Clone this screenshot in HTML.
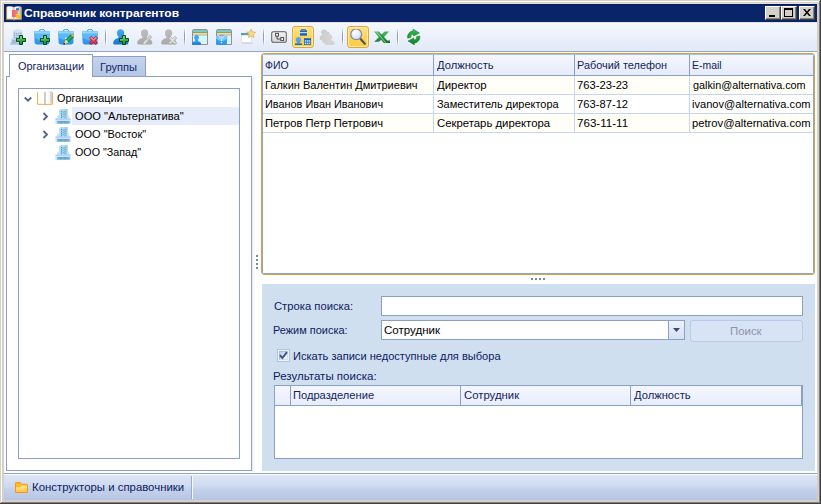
<!DOCTYPE html><html><head><meta charset="utf-8"><title>Справочник контрагентов</title><style>
html,body{margin:0;padding:0}body{width:821px;height:504px;position:relative;overflow:hidden;background:#d4d0c8;font:11px "Liberation Sans",sans-serif}
div,span,svg{box-sizing:border-box}
.t{position:absolute;white-space:pre;line-height:13px;height:13px;transform-origin:0 0;font:11px/13px "Liberation Sans",sans-serif}
.b{font-weight:bold}

</style></head><body>
<svg width="0" height="0" style="position:absolute"><defs>
<linearGradient id="bg1" x1="0" y1="0" x2="0" y2="1"><stop offset="0" stop-color="#4cb0f6"/><stop offset="1" stop-color="#2890ea"/></linearGradient>
<linearGradient id="pg1" x1="0" y1="0" x2="0" y2="1"><stop offset="0" stop-color="#44a8f4"/><stop offset=".5" stop-color="#2c94e8"/><stop offset="1" stop-color="#1274d0"/></linearGradient>
<linearGradient id="pgd" x1="0" y1="0" x2="0" y2="1"><stop offset="0" stop-color="#bebebe"/><stop offset="1" stop-color="#a8a8a8"/></linearGradient>
<linearGradient id="gp" x1="0" y1="0" x2="0" y2="1"><stop offset="0" stop-color="#58cc68"/><stop offset="1" stop-color="#168a2e"/></linearGradient>
<linearGradient id="fg1" x1="0" y1="0" x2="0" y2="1"><stop offset="0" stop-color="#ffe89c"/><stop offset="1" stop-color="#fcc444"/></linearGradient>
<linearGradient id="pgL" x1="0" y1="0" x2="1" y2="0"><stop offset="0" stop-color="#ffffff"/><stop offset=".6" stop-color="#f4fbfd"/><stop offset="1" stop-color="#c8e4ea"/></linearGradient>
<linearGradient id="pgR" x1="0" y1="0" x2="1" y2="0"><stop offset="0" stop-color="#ffffff"/><stop offset=".5" stop-color="#e0f0f4"/><stop offset="1" stop-color="#9cc0c4"/></linearGradient>
<linearGradient id="bkR" x1="0" y1="0" x2="1" y2="0"><stop offset="0" stop-color="#fafafa"/><stop offset=".3" stop-color="#ffffff"/><stop offset=".7" stop-color="#f4f4f6"/><stop offset="1" stop-color="#b4b4bc"/></linearGradient>
<linearGradient id="bkL" x1="0" y1="0" x2="1" y2="0"><stop offset="0" stop-color="#ffffff"/><stop offset=".8" stop-color="#fdfdfd"/><stop offset="1" stop-color="#e8ece8"/></linearGradient>
<linearGradient id="redg" x1="0" y1="0" x2="1" y2="0"><stop offset="0" stop-color="#e85c68" stop-opacity=".8"/><stop offset="1" stop-color="#f89090" stop-opacity=".6"/></linearGradient>
<radialGradient id="lens" cx=".4" cy=".35" r=".75"><stop offset="0" stop-color="#ffffff"/><stop offset="1" stop-color="#c4dcf4"/></radialGradient>
<linearGradient id="xl1" x1="0" y1="0" x2="1" y2="1"><stop offset="0" stop-color="#5cbc68"/><stop offset=".5" stop-color="#2a9240"/><stop offset="1" stop-color="#14702a"/></linearGradient>
<linearGradient id="xl2" x1="1" y1="0" x2="0" y2="1"><stop offset="0" stop-color="#58bc64"/><stop offset="1" stop-color="#1c7c30"/></linearGradient>
<linearGradient id="rf" x1="0" y1="0" x2="0" y2="1"><stop offset="0" stop-color="#34c454"/><stop offset="1" stop-color="#159030"/></linearGradient>
<linearGradient id="rf2" x1="0" y1="1" x2="0" y2="0"><stop offset="0" stop-color="#22a840"/><stop offset="1" stop-color="#108028"/></linearGradient>
<linearGradient id="stg" x1="0" y1="0" x2="0" y2="1"><stop offset="0" stop-color="#f4f4f4"/><stop offset="1" stop-color="#d4d4d4"/></linearGradient>
<linearGradient id="rxg" x1="0" y1="0" x2="0" y2="1"><stop offset="0" stop-color="#fa8c94"/><stop offset=".5" stop-color="#ee4456"/><stop offset="1" stop-color="#dc2436"/></linearGradient>
</defs></svg>
<div style="position:absolute;left:0px;top:0px;width:821px;height:504px;background:#d4d0c8"></div>
<div style="position:absolute;left:0px;top:0px;width:820px;height:503px;border-left:1px solid #d4d0c8;border-top:1px solid #d4d0c8"></div>
<div style="position:absolute;left:1px;top:1px;width:819px;height:502px;border-left:1px solid #fff;border-top:1px solid #fff"></div>
<div style="position:absolute;left:4px;top:3px;width:813px;height:1px;background:#e4e0d6"></div>
<div style="position:absolute;left:0px;top:0px;width:821px;height:504px;border-right:1px solid #404040;border-bottom:1px solid #404040"></div>
<div style="position:absolute;left:1px;top:1px;width:819px;height:502px;border-right:1px solid #808080;border-bottom:1px solid #808080"></div>
<div style="position:absolute;left:4px;top:4px;width:813px;height:18px;background:#0a246a"></div>
<div style="position:absolute;left:4px;top:4px;width:813px;height:1px;background:#031c68"></div>
<svg style="position:absolute;left:6px;top:5px" width="16" height="16" viewBox="0 0 16 16"><path d="M.400 2.200H15.600V14.600H9L8 15.300 7 14.600H.400z" fill="#e0b866" stroke="#c89a40" stroke-width=".6"/><path d="M1.200 1.400Q5 .600 7.800 2.200V14.300Q5 13 1.200 13.600z" fill="url(#pgL)"/><path d="M14.800 1.400Q11 .600 8.200 2.200V14.300Q11 13 14.800 13.600z" fill="url(#pgR)"/><path d="M8 2.200v12.300" stroke="#8aa4a8" stroke-width=".6"/><rect x="10.100" y="3.200" width="2.800" height="2.200" fill="#1e70c0"/><rect x="6.100" y="5" width="5.800" height="7" fill="#ee7078"/><rect x="6.100" y="5" width="5.800" height="7" fill="url(#redg)"/><rect x="9.900" y="8.900" width="4.100" height="4" fill="#fcbc1c"/><rect x="9.900" y="8.900" width="4.100" height="1.200" fill="#fdd440"/></svg>
<div style="position:absolute;left:765px;top:6px;width:16px;height:14px;background:#d4d0c8;border:1px solid;border-color:#fff #404040 #404040 #fff;box-shadow:inset -1px -1px 0 #808080"></div>
<div style="position:absolute;left:781px;top:6px;width:16px;height:14px;background:#d4d0c8;border:1px solid;border-color:#fff #404040 #404040 #fff;box-shadow:inset -1px -1px 0 #808080"></div>
<div style="position:absolute;left:799px;top:6px;width:16px;height:14px;background:#d4d0c8;border:1px solid;border-color:#fff #404040 #404040 #fff;box-shadow:inset -1px -1px 0 #808080"></div>
<div style="position:absolute;left:769px;top:15px;width:6px;height:2px;background:#000"></div>
<div style="position:absolute;left:784px;top:8px;width:9px;height:9px;border:1px solid #000;border-top-width:2px"></div>
<svg style="position:absolute;left:803px;top:9px" width="8" height="7" viewBox="0 0 8 7"><path d="M0 0h2l2 2.500L6 0h2L5 3.500 8 7H6L4 4.500 2 7H0l3-3.500z" fill="#000"/></svg>
<div style="position:absolute;left:4px;top:23px;width:813px;height:477px;background:#fff"></div>
<div style="position:absolute;left:4px;top:22px;width:813px;height:1px;background:#e6e2d8"></div>
<div style="position:absolute;left:4px;top:23px;width:813px;height:28px;background:linear-gradient(#f4f7fd,#ebf0fa 50%,#e2e9f8)"></div>
<div style="position:absolute;left:4px;top:51px;width:813px;height:1px;background:#94a4c6"></div>
<div style="position:absolute;left:292px;top:26px;width:22px;height:22px;background:linear-gradient(#ffe08a,#ffd458 50%,#ffcc44);border:1px solid #e0a838;border-radius:3px;box-shadow:inset 0 0 0 1px #ffe8a8"></div>
<div style="position:absolute;left:347px;top:26px;width:22px;height:22px;background:linear-gradient(#ffe08a,#ffd458 50%,#ffcc44);border:1px solid #e0a838;border-radius:3px;box-shadow:inset 0 0 0 1px #ffe8a8"></div>
<div style="position:absolute;left:105px;top:28px;width:1px;height:18px;background:linear-gradient(rgba(138,156,192,0),#8a9cc0 35%,#8a9cc0 65%,rgba(138,156,192,0))"></div>
<div style="position:absolute;left:106px;top:28px;width:1px;height:18px;background:linear-gradient(rgba(255,255,255,0),#fff 30%,#fff 70%,rgba(255,255,255,0))"></div>
<div style="position:absolute;left:184px;top:28px;width:1px;height:18px;background:linear-gradient(rgba(138,156,192,0),#8a9cc0 35%,#8a9cc0 65%,rgba(138,156,192,0))"></div>
<div style="position:absolute;left:185px;top:28px;width:1px;height:18px;background:linear-gradient(rgba(255,255,255,0),#fff 30%,#fff 70%,rgba(255,255,255,0))"></div>
<div style="position:absolute;left:263px;top:28px;width:1px;height:18px;background:linear-gradient(rgba(138,156,192,0),#8a9cc0 35%,#8a9cc0 65%,rgba(138,156,192,0))"></div>
<div style="position:absolute;left:264px;top:28px;width:1px;height:18px;background:linear-gradient(rgba(255,255,255,0),#fff 30%,#fff 70%,rgba(255,255,255,0))"></div>
<div style="position:absolute;left:342px;top:28px;width:1px;height:18px;background:linear-gradient(rgba(138,156,192,0),#8a9cc0 35%,#8a9cc0 65%,rgba(138,156,192,0))"></div>
<div style="position:absolute;left:343px;top:28px;width:1px;height:18px;background:linear-gradient(rgba(255,255,255,0),#fff 30%,#fff 70%,rgba(255,255,255,0))"></div>
<div style="position:absolute;left:397px;top:28px;width:1px;height:18px;background:linear-gradient(rgba(138,156,192,0),#8a9cc0 35%,#8a9cc0 65%,rgba(138,156,192,0))"></div>
<div style="position:absolute;left:398px;top:28px;width:1px;height:18px;background:linear-gradient(rgba(255,255,255,0),#fff 30%,#fff 70%,rgba(255,255,255,0))"></div>
<svg style="position:absolute;left:10px;top:29px" width="16" height="16" viewBox="0 0 16 16"><path d="M3.200 2.200Q3.200 .600 7.700 .600T12.200 2.200V11H3.200z" fill="#b4d2f0"/><ellipse cx="7.700" cy="2.200" rx="4.500" ry="1.600" fill="#cfe2f6"/><path d="M4.500 3.800v7M6.500 4v7M8.500 4v7M10.700 3.800v7" stroke="#98a4b8" stroke-width=".9"/><path d="M3.200 5.500h9M3.200 7.500h9M3.200 9.500h9" stroke="#c8dcf0" stroke-width=".7"/><path d="M1.500 9.500h6V15.500H.500z" fill="#b8d4f2"/><path d="M.300 13.500h9v2.200h-9z" fill="#a4c8f0"/><path d="M2.200 11.300h3.600v2.400h-3.600z" fill="#98a4b8"/><path d="M2.200 12.300h3.600" stroke="#c8dcf0" stroke-width=".5"/><g transform="translate(6,6)"><path d="M3.500 .500h3v3h3v3h-3v3h-3v-3h-3v-3h3z" fill="url(#gp)" stroke="#0c4a1a" stroke-width="1" stroke-linejoin="round"/><path d="M4.200 1.200h1.600v2.800h-1.600zM1.200 4.200h3v1h-3z" fill="#8fe89a" opacity=".55"/></g></svg>
<svg style="position:absolute;left:34px;top:29px" width="16" height="16" viewBox="0 0 16 16"><path d="M4.600 2.800 6 .700h4L11.400 2.800" fill="none" stroke="#3aa0f0" stroke-width="1"/><path d="M.200 2.400H15.800L15.400 13.600Q15.300 15.400 13.400 15.400H2.600Q.700 15.400 .600 13.600z" fill="url(#bg1)"/><path d="M.200 2.400H15.800L15.600 7.500Q12.500 12 8 10.400 3.500 12 .400 7.500z" fill="#5cb8f8"/><path d="M.200 2.400H15.800L15.700 4.600H.300z" fill="#92d4fc"/><rect x="7.200" y="8.600" width="1.600" height="1.600" fill="#e8f6ff"/><g transform="translate(6,6)"><path d="M3.500 .500h3v3h3v3h-3v3h-3v-3h-3v-3h3z" fill="url(#gp)" stroke="#0c4a1a" stroke-width="1" stroke-linejoin="round"/><path d="M4.200 1.200h1.600v2.800h-1.600zM1.200 4.200h3v1h-3z" fill="#8fe89a" opacity=".55"/></g></svg>
<svg style="position:absolute;left:58px;top:29px" width="16" height="16" viewBox="0 0 16 16"><path d="M4.600 2.800 6 .700h4L11.400 2.800" fill="none" stroke="#3aa0f0" stroke-width="1"/><path d="M.200 2.400H15.800L15.400 13.600Q15.300 15.400 13.400 15.400H2.600Q.700 15.400 .600 13.600z" fill="url(#bg1)"/><path d="M.200 2.400H15.800L15.600 7.500Q12.500 12 8 10.400 3.500 12 .400 7.500z" fill="#5cb8f8"/><path d="M.200 2.400H15.800L15.700 4.600H.300z" fill="#92d4fc"/><rect x="7.200" y="8.600" width="1.600" height="1.600" fill="#e8f6ff"/><g transform="translate(5.3,4.8)"><path d="M.3 10.700 1.600 7 7.600 1 10 3.400 4 9.400z" fill="#18a048" stroke="#0a5a24" stroke-width=".7" stroke-linejoin="round"/><path d="M2.600 8 8.300 2.300" stroke="#6fd88a" stroke-width=".8" opacity=".7"/><path d="M7.600 1 8.600 0 11 2.400 10 3.400z" fill="#ffc820" stroke="#c08a10" stroke-width=".5"/><path d="M.3 10.700 1.600 7 4 9.400z" fill="#ffe070"/><path d="M.3 10.700 .9 9 2 10.100z" fill="#000"/><path d="M1.600 7 2.600 6 5 8.400 4 9.400z" fill="#fff" opacity=".85"/></g></svg>
<svg style="position:absolute;left:82px;top:29px" width="16" height="16" viewBox="0 0 16 16"><path d="M4.600 2.800 6 .700h4L11.400 2.800" fill="none" stroke="#3aa0f0" stroke-width="1"/><path d="M.200 2.400H15.800L15.400 13.600Q15.300 15.400 13.400 15.400H2.600Q.700 15.400 .600 13.600z" fill="url(#bg1)"/><path d="M.200 2.400H15.800L15.600 7.500Q12.500 12 8 10.400 3.500 12 .400 7.500z" fill="#5cb8f8"/><path d="M.200 2.400H15.800L15.700 4.600H.300z" fill="#92d4fc"/><rect x="7.200" y="8.600" width="1.600" height="1.600" fill="#e8f6ff"/><g transform="translate(7,7)"><path d="M2.100 .400 4.500 2.800 6.900 .400 8.600 2.100 6.200 4.500 8.600 6.900 6.900 8.600 4.500 6.200 2.100 8.600 .400 6.900 2.800 4.500 .400 2.100z" fill="url(#rxg)" stroke="#a81426" stroke-width=".9" stroke-linejoin="round"/><path d="M2.100 1.500 4.500 3.900 6.900 1.500" fill="none" stroke="#fff" stroke-width=".9" opacity=".5"/></g></svg>
<svg style="position:absolute;left:113px;top:29px" width="16" height="16" viewBox="0 0 16 16"><g transform="translate(0,0) scale(1)"><path d="M7.600 .300C9.800 .300 11.200 2 11.200 4.100 11.200 5.700 10.500 7 9.700 7.800L9.800 9C12.600 9.600 15 10.800 15.400 13.800Q15.500 15.500 14 15.500H1.500Q0 15.500 .200 13.800C.600 10.800 2.800 9.600 5.400 9L5.500 7.800C4.700 7 4 5.700 4 4.100 4 2 5.400 .300 7.600 .300z" fill="url(#pg1)"/></g><g transform="translate(6,6)"><path d="M3.500 .500h3v3h3v3h-3v3h-3v-3h-3v-3h3z" fill="url(#gp)" stroke="#0c4a1a" stroke-width="1" stroke-linejoin="round"/><path d="M4.200 1.200h1.600v2.800h-1.600zM1.200 4.200h3v1h-3z" fill="#8fe89a" opacity=".55"/></g></svg>
<svg style="position:absolute;left:137px;top:29px" width="16" height="16" viewBox="0 0 16 16"><g transform="translate(0,0) scale(1)"><path d="M7.600 .300C9.800 .300 11.200 2 11.200 4.100 11.200 5.700 10.500 7 9.700 7.800L9.800 9C12.600 9.600 15 10.800 15.400 13.800Q15.500 15.500 14 15.500H1.500Q0 15.500 .200 13.800C.600 10.800 2.800 9.600 5.400 9L5.500 7.800C4.700 7 4 5.700 4 4.100 4 2 5.400 .300 7.600 .300z" fill="url(#pgd)"/></g><path d="M6.300 15.200 7.300 12.300 12.800 6.200 14.800 8 9.300 14z" fill="#cdcdcd" stroke="#a6a6a6" stroke-width=".6"/><path d="M6.300 15.200 7.300 12.300 9.300 14z" fill="#ececec"/><path d="M8.200 11.300 10.200 13.100" stroke="#f4f4f4" stroke-width=".8"/></svg>
<svg style="position:absolute;left:161px;top:29px" width="16" height="16" viewBox="0 0 16 16"><g transform="translate(0,0) scale(1)"><path d="M7.600 .300C9.800 .300 11.200 2 11.200 4.100 11.200 5.700 10.500 7 9.700 7.800L9.800 9C12.600 9.600 15 10.800 15.400 13.800Q15.500 15.500 14 15.500H1.500Q0 15.500 .200 13.800C.600 10.800 2.800 9.600 5.400 9L5.500 7.800C4.700 7 4 5.700 4 4.100 4 2 5.400 .300 7.600 .300z" fill="url(#pgd)"/></g><g transform="translate(7,7)"><path d="M2.100 .400 4.500 2.800 6.900 .400 8.600 2.100 6.200 4.500 8.600 6.900 6.900 8.600 4.500 6.200 2.100 8.600 .400 6.900 2.800 4.500 .400 2.100z" fill="#dcdcdc" stroke="#a8a8a8" stroke-width=".9" stroke-linejoin="round"/><path d="M2.100 1.500 4.500 3.900 6.900 1.500" fill="none" stroke="#fff" stroke-width=".9" opacity=".5"/></g></svg>
<svg style="position:absolute;left:192px;top:29px" width="16" height="16" viewBox="0 0 16 16"><path d="M.500 15.500V1.800Q.500 .500 1.800 .500H14.200Q15.500 .500 15.500 1.800V15.500z" fill="#d8f4fc" stroke="#8e9298" stroke-width="1"/><path d="M1 1h14v2.100H1z" fill="#76ccc0"/><path d="M1 3h14v.850H1z" fill="#74787c"/><path d="M1 3.850h14v1.800H1z" fill="#f4e07c"/><path d="M1 5.650h14v.750H1z" fill="#a8a284"/><ellipse cx="4.600" cy="8.600" rx="2.300" ry="2.600" fill="#3ca4f2"/><path d="M0 15.800V14.500Q0 12.500 3 12.200L3.500 10.500H5.700L6.200 12.200Q9 12.500 9 14.500V15.800z" fill="url(#pg1)"/></svg>
<svg style="position:absolute;left:216px;top:29px" width="16" height="16" viewBox="0 0 16 16"><path d="M.500 15.500V1.800Q.500 .500 1.800 .500H14.200Q15.500 .500 15.500 1.800V15.500z" fill="#d8f4fc" stroke="#8e9298" stroke-width="1"/><path d="M1 1h14v2.100H1z" fill="#76ccc0"/><path d="M1 3h14v.850H1z" fill="#74787c"/><path d="M1 3.850h14v1.800H1z" fill="#f4e07c"/><path d="M1 5.650h14v.750H1z" fill="#a8a284"/><path d="M0 7h11.200l-.3 7.600Q10.800 15.800 9.600 15.800H1.200Q.100 15.800 .100 14.600z" fill="url(#bg1)"/><path d="M3.200 7.200Q5.600 4.600 8 7.200" fill="none" stroke="#3aa0f0" stroke-width=".9"/><path d="M0 7h11.200l-.1 2.600Q8.400 12.600 5.600 11.400 2.800 12.600 .100 9.600z" fill="#7cc8fa"/><path d="M2.500 7.300h6.200l-1 2.400H3.500z" fill="#c8e8fe" opacity=".7"/><circle cx="5.500" cy="11.300" r=".75" fill="#fff"/><circle cx="5.500" cy="13.600" r=".75" fill="#fff"/></svg>
<svg style="position:absolute;left:240px;top:29px" width="16" height="16" viewBox="0 0 16 16"><path d="M2 14.300h10.500" stroke="#c4c8d0" stroke-width="1.400" opacity=".6"/><rect x="1.300" y="4.300" width="10.400" height="9" fill="#fff" stroke="#d0d4da" stroke-width=".6"/><path d="M1 4h11v2.200H1z" fill="#4ca4c8"/><path d="M1 4h11v.700H1z" fill="#788896" opacity=".6"/><path d="M11.200 .200 12.500 2.900 15.600 3.300 13.400 5.500 13.900 8.500 11.200 7.100 8.500 8.500 9 5.500 6.800 3.300 9.900 2.900z" fill="#fad88c" stroke="#e2a444" stroke-width=".7" stroke-linejoin="round"/></svg>
<svg style="position:absolute;left:271px;top:29px" width="16" height="16" viewBox="0 0 16 16"><rect x=".600" y="2.600" width="14.800" height="10.800" rx="2.200" fill="url(#stg)" stroke="#7c7c7c" stroke-width="1.200"/><rect x="4.600" y="4.300" width="2.800" height="2.800" fill="#fff" stroke="#3c3c3c" stroke-width=".9"/><rect x="9.800" y="8.600" width="2.800" height="2.800" fill="#fff" stroke="#3c3c3c" stroke-width=".9"/><path d="M6 7.100V10H9.800" fill="none" stroke="#3c3c3c" stroke-width=".9"/></svg>
<svg style="position:absolute;left:295px;top:29px" width="16" height="16" viewBox="0 0 16 16"><path d="M6.400 1.500V1Q6.400 .300 7.100 .300h2.800Q10.600 .300 10.600 1V1.500" fill="none" stroke="#1868c0" stroke-width="1"/><path d="M5 1.400h7v5.300H5z" fill="#1466c0"/><path d="M5 3h7v1.200H5z" fill="#b4dcfc"/><circle cx="3.500" cy="10.700" r="2.700" fill="#52a6f2"/><path d="M2.300 12.800h2.400v1.800H2.300z" fill="#3a92e4"/><path d="M0 14.400h7v1.600H0z" fill="#1470d0"/><path d="M9 9.200h7v6.800H9z" fill="#1466c0"/><path d="M9.800 11.200h5.500v4H9.800z" fill="#d4eaff"/><path d="M11.450 11.200v4M13.650 11.200v4" stroke="#1466c0" stroke-width=".7"/><path d="M9.800 13.200h5.500" stroke="#1466c0" stroke-width=".8"/></svg>
<svg style="position:absolute;left:319px;top:29px" width="16" height="16" viewBox="0 0 16 16"><g fill="#cdcdcd"><circle cx="5" cy="3.300" r="2.800"/><path d="M.500 9Q1 5.500 5 6L9 9 6 12 1 11z"/><circle cx="8" cy="5.300" r="2.900" fill="#d0d0d0"/><path d="M3 12Q3.500 8 8 8.500L12.500 11 10 14.500 4 14z" fill="#d0d0d0"/><circle cx="10.500" cy="8.300" r="2.800" fill="#d3d3d3"/><path d="M5.500 15Q6 10.500 10.500 11 15.500 11.500 16 14.500 15.500 16 13 16H7Q5.500 16 5.500 15z" fill="#d3d3d3"/></g></svg>
<svg style="position:absolute;left:350px;top:29px" width="16" height="16" viewBox="0 0 16 16"><path d="M10.400 9.700 14.800 14.700" stroke="#50545c" stroke-width="2.100" stroke-linecap="round"/><circle cx="6.200" cy="5.300" r="5.400" fill="url(#lens)" stroke="#7c8ca8" stroke-width="1.200"/><path d="M2.600 4.300Q4 1.700 7 2" fill="none" stroke="#fff" stroke-width=".9" opacity=".9"/></svg>
<svg style="position:absolute;left:374px;top:29px" width="16" height="16" viewBox="0 0 16 16"><path d="M10.600 2.500H15.300L5.200 12.800H.200z" fill="url(#xl2)"/><path d="M0 2.500H4.900L13.300 11.500H16V14H9.800z" fill="url(#xl1)"/><path d="M2.300 2.700 11.800 13.800" stroke="#c0f0c8" stroke-width=".7"/></svg>
<svg style="position:absolute;left:406px;top:29px" width="16" height="16" viewBox="0 0 16 16"><path d="M1.600 9.100A6.200 6.200 0 0 1 7.160 1.820L7 .100 13.400 4 7.600 7 7.440 5A3 3 0 0 0 4.750 8.500z" fill="url(#rf)" stroke="#0e7a24" stroke-width=".5" stroke-linejoin="round"/><g transform="rotate(180 7.700 8)"><path d="M1.600 9.100A6.200 6.200 0 0 1 7.160 1.820L7 .100 13.400 4 7.600 7 7.440 5A3 3 0 0 0 4.750 8.500z" fill="url(#rf2)" stroke="#0e7a24" stroke-width=".5" stroke-linejoin="round"/></g></svg>
<div style="position:absolute;left:6px;top:76px;width:246px;height:395px;border:1px solid #8ba0c4;background:#fff"></div>
<div style="position:absolute;left:92px;top:56px;width:54px;height:21px;border:1px solid #8ba0c4;background:linear-gradient(#c4d4ee,#b4c6e4);"></div>
<div style="position:absolute;left:9px;top:54px;width:84px;height:23px;border:1px solid #8ba0c4;border-bottom:none;background:#fff"></div>
<div style="position:absolute;left:252px;top:77px;width:3px;height:395px;background:linear-gradient(90deg,#ebebeb,#fff)"></div>
<div style="position:absolute;left:18px;top:88px;width:222px;height:371px;border:1px solid #8ba0c4;background:#fff"></div>
<div style="position:absolute;left:72px;top:107px;width:167px;height:18px;background:#e6ecfa"></div>
<svg style="position:absolute;left:24px;top:96px" width="8" height="7" viewBox="0 0 8 7"><path d="M.8 1.500 4 4.700 7.200 1.500" fill="none" stroke="#55618c" stroke-width="1.800"/></svg>
<svg style="position:absolute;left:42px;top:112px" width="7" height="9" viewBox="0 0 7 9"><path d="M1.500 1 5 4.500 1.500 8" fill="none" stroke="#55618c" stroke-width="1.800"/></svg>
<svg style="position:absolute;left:42px;top:130px" width="7" height="9" viewBox="0 0 7 9"><path d="M1.500 1 5 4.500 1.500 8" fill="none" stroke="#55618c" stroke-width="1.800"/></svg>
<svg style="position:absolute;left:37px;top:90px" width="16" height="16" viewBox="0 0 16 16"><path d="M.600 2.400V14.300H7L8 15 9 14.300H15.400V2.400" fill="#fffaf0" stroke="#e2a234" stroke-width=".9" stroke-linejoin="round"/><path d="M1.500 1.200Q5 .500 7.700 1.900V14Q5 12.900 1.500 13.400z" fill="url(#bkL)"/><path d="M14.500 1.200Q11 .500 8.300 1.900V14Q11 12.900 14.500 13.400z" fill="url(#bkR)"/><path d="M8 1.900v12.300" stroke="#6c6c6c" stroke-width=".6"/></svg>
<svg style="position:absolute;left:55px;top:108px" width="16" height="16" viewBox="0 0 16 16"><path d="M4.200 2 6.200 .900H12.500V11.500H4.200z" fill="#b0e0dc"/><path d="M10.500 .900H12.500V11.500H10.500z" fill="#9cd0d0"/><path d="M6 1.500H10.300V11H6z" fill="#b4d8f8"/><path d="M6.500 3v7.500M10 3v7.500" stroke="#4c78d0" stroke-width="1" stroke-dasharray="1.300 .800" opacity=".85"/><path d="M7.300 3.500h2v1.200h-2zM7.300 5.800h2V7h-2zM7.300 8.100h2v1.200h-2z" fill="#5cc0f8"/><path d="M2.200 7.500h2.200V11.500H2.200zM12.300 7.500h2V11.500h-2z" fill="#c0e8ec"/><path d="M.400 10.600H15.800V16H.400z" fill="#c6e4fb"/><path d="M.400 10.600H15.800v1H.400z" fill="#a4c8f2"/><path d="M2.300 13h12.200v2.400H2.300z" fill="#8c9cc8"/><path d="M2.300 14.300h12.200v1.100H2.300z" fill="#58c0f4"/><path d="M6 13v2.400M10.200 13v2.400" stroke="#5a9a90" stroke-width=".8"/></svg>
<svg style="position:absolute;left:55px;top:126px" width="16" height="16" viewBox="0 0 16 16"><path d="M4.200 2 6.200 .900H12.500V11.500H4.200z" fill="#b0e0dc"/><path d="M10.500 .900H12.500V11.500H10.500z" fill="#9cd0d0"/><path d="M6 1.500H10.300V11H6z" fill="#b4d8f8"/><path d="M6.500 3v7.500M10 3v7.500" stroke="#4c78d0" stroke-width="1" stroke-dasharray="1.300 .800" opacity=".85"/><path d="M7.300 3.500h2v1.200h-2zM7.300 5.800h2V7h-2zM7.300 8.100h2v1.200h-2z" fill="#5cc0f8"/><path d="M2.200 7.500h2.200V11.500H2.200zM12.300 7.500h2V11.500h-2z" fill="#c0e8ec"/><path d="M.400 10.600H15.800V16H.400z" fill="#c6e4fb"/><path d="M.400 10.600H15.800v1H.400z" fill="#a4c8f2"/><path d="M2.300 13h12.200v2.400H2.300z" fill="#8c9cc8"/><path d="M2.300 14.300h12.200v1.100H2.300z" fill="#58c0f4"/><path d="M6 13v2.400M10.200 13v2.400" stroke="#5a9a90" stroke-width=".8"/></svg>
<svg style="position:absolute;left:55px;top:144px" width="16" height="16" viewBox="0 0 16 16"><path d="M4.200 2 6.200 .900H12.500V11.500H4.200z" fill="#b0e0dc"/><path d="M10.500 .900H12.500V11.500H10.500z" fill="#9cd0d0"/><path d="M6 1.500H10.300V11H6z" fill="#b4d8f8"/><path d="M6.500 3v7.500M10 3v7.500" stroke="#4c78d0" stroke-width="1" stroke-dasharray="1.300 .800" opacity=".85"/><path d="M7.300 3.500h2v1.200h-2zM7.300 5.800h2V7h-2zM7.300 8.100h2v1.200h-2z" fill="#5cc0f8"/><path d="M2.200 7.500h2.200V11.500H2.200zM12.300 7.500h2V11.500h-2z" fill="#c0e8ec"/><path d="M.400 10.600H15.800V16H.400z" fill="#c6e4fb"/><path d="M.400 10.600H15.800v1H.400z" fill="#a4c8f2"/><path d="M2.300 13h12.200v2.400H2.300z" fill="#8c9cc8"/><path d="M2.300 14.300h12.200v1.100H2.300z" fill="#58c0f4"/><path d="M6 13v2.400M10.200 13v2.400" stroke="#5a9a90" stroke-width=".8"/></svg>
<div style="position:absolute;left:256px;top:255px;width:2px;height:2px;background:#7488b8"></div>
<div style="position:absolute;left:256px;top:259px;width:2px;height:2px;background:#7488b8"></div>
<div style="position:absolute;left:256px;top:263px;width:2px;height:2px;background:#7488b8"></div>
<div style="position:absolute;left:256px;top:267px;width:2px;height:2px;background:#7488b8"></div>
<div style="position:absolute;left:261px;top:53px;width:554px;height:222px;border:1px solid #d8a440;border-radius:3px;background:#fff"></div>
<div style="position:absolute;left:262px;top:54px;width:552px;height:220px;border:1px solid #8ea4d0;border-top-color:#aabce0;background:#fff;border-radius:2px"></div>
<div style="position:absolute;left:263px;top:55px;width:550px;height:20px;background:linear-gradient(#f5f7fe,#e6ebfa)"></div>
<div style="position:absolute;left:263px;top:75px;width:550px;height:1px;background:#8ba0c4"></div>
<div style="position:absolute;left:263px;top:76px;width:550px;height:18px;background:#fffef7"></div>
<div style="position:absolute;left:263px;top:94px;width:550px;height:1px;background:#c6d6f0"></div>
<div style="position:absolute;left:263px;top:95px;width:550px;height:18px;background:#fff"></div>
<div style="position:absolute;left:263px;top:113px;width:550px;height:1px;background:#c6d6f0"></div>
<div style="position:absolute;left:263px;top:114px;width:550px;height:18px;background:#fffef7"></div>
<div style="position:absolute;left:263px;top:132px;width:550px;height:1px;background:#c6d6f0"></div>
<div style="position:absolute;left:433px;top:55px;width:1px;height:20px;background:#8ba0c4"></div>
<div style="position:absolute;left:433px;top:76px;width:1px;height:57px;background:#c6d6f0"></div>
<div style="position:absolute;left:574px;top:55px;width:1px;height:20px;background:#8ba0c4"></div>
<div style="position:absolute;left:574px;top:76px;width:1px;height:57px;background:#c6d6f0"></div>
<div style="position:absolute;left:689px;top:55px;width:1px;height:20px;background:#8ba0c4"></div>
<div style="position:absolute;left:689px;top:76px;width:1px;height:57px;background:#c6d6f0"></div>
<div style="position:absolute;left:531px;top:278px;width:2px;height:2px;background:#7488b8"></div>
<div style="position:absolute;left:535px;top:278px;width:2px;height:2px;background:#7488b8"></div>
<div style="position:absolute;left:539px;top:278px;width:2px;height:2px;background:#7488b8"></div>
<div style="position:absolute;left:543px;top:278px;width:2px;height:2px;background:#7488b8"></div>
<div style="position:absolute;left:262px;top:284px;width:553px;height:187px;background:#cfdff0"></div>
<div style="position:absolute;left:381px;top:296px;width:422px;height:20px;border:1px solid #8ba0c4;background:#fff"></div>
<div style="position:absolute;left:381px;top:320px;width:304px;height:20px;border:1px solid #8ba0c4;background:#fff"></div>
<div style="position:absolute;left:668px;top:321px;width:16px;height:18px;border-left:1px solid #8ba0c4;background:linear-gradient(#eef3fc,#d4e0f4)"></div>
<svg style="position:absolute;left:673px;top:328px" width="7" height="4" viewBox="0 0 7 4"><path d="M0 0h7L3.500 4z" fill="#3c4a78"/></svg>
<div style="position:absolute;left:690px;top:320px;width:113px;height:22px;border:1px solid #bccaea;border-radius:3px;background:#d8e3f5"></div>
<div style="position:absolute;left:277px;top:349px;width:13px;height:13px;border:1px solid #aec2ea;background:#eef2fb"></div>
<div style="position:absolute;left:279px;top:351px;width:9px;height:9px;border:1px solid;border-color:#b4b8c8 #dcdee6 #dcdee6 #b4b8c8;background:linear-gradient(135deg,#c8ccd8,#f6f6fa)"></div>
<svg style="position:absolute;left:279px;top:351px" width="9" height="9" viewBox="0 0 9 9"><path d="M1 4.200 3.300 7 8 1.200" fill="none" stroke="#2e5596" stroke-width="1.900"/></svg>
<div style="position:absolute;left:274px;top:385px;width:529px;height:74px;border:1px solid #8ba0c4;background:#fff"></div>
<div style="position:absolute;left:275px;top:386px;width:527px;height:19px;background:linear-gradient(#f5f7fe,#e8edfb)"></div>
<div style="position:absolute;left:275px;top:405px;width:527px;height:1px;background:#8ba0c4"></div>
<div style="position:absolute;left:290px;top:386px;width:1px;height:19px;background:#8ba0c4"></div>
<div style="position:absolute;left:460px;top:386px;width:1px;height:19px;background:#8ba0c4"></div>
<div style="position:absolute;left:630px;top:386px;width:1px;height:19px;background:#8ba0c4"></div>
<div style="position:absolute;left:801px;top:386px;width:1px;height:19px;background:#8ba0c4"></div>
<div style="position:absolute;left:4px;top:473px;width:813px;height:1px;background:#8ca4cc"></div>
<div style="position:absolute;left:4px;top:474px;width:813px;height:26px;background:linear-gradient(#fff 0,#fff 1px,#dde6f7 1px,#cedaf1 45%,#c3d1eb 60%,#b6c6e2)"></div>
<div style="position:absolute;left:191px;top:476px;width:1px;height:23px;background:#98acd0"></div>
<div style="position:absolute;left:192px;top:476px;width:1px;height:23px;background:#f4f8fe"></div>
<svg style="position:absolute;left:15px;top:482px" width="13" height="11" viewBox="0 0 13 11"><path d="M.5 1.300Q.5 .5 1.300 .5H5.300L6.600 2.300H11.700Q12.500 2.300 12.500 3.100V10.500H.5z" fill="#fcbc20" stroke="#f89418" stroke-width="1" stroke-linejoin="round"/><path d="M1 5.300 5.500 5.200 7 3.400H12V10H1z" fill="url(#fg1)"/></svg>
<span class="t b" style="left:24.0px;top:7px;color:#ffffff;transform:scaleX(1.0933)">Справочник контрагентов</span>
<span class="t" style="left:18.0px;top:60px;color:#101e5c;transform:scaleX(0.9933)">Организации</span>
<span class="t" style="left:99.5px;top:61px;color:#13266a;transform:scaleX(1.0094)">Группы</span>
<span class="t" style="left:57.0px;top:92px;color:#000;transform:scaleX(0.9858)">Организации</span>
<span class="t" style="left:75.0px;top:110px;color:#000;transform:scaleX(1.0121)">ООО &quot;Альтернатива&quot;</span>
<span class="t" style="left:75.0px;top:128px;color:#000;transform:scaleX(0.9966)">ООО &quot;Восток&quot;</span>
<span class="t" style="left:75.0px;top:146px;color:#000;transform:scaleX(0.9750)">ООО &quot;Запад&quot;</span>
<span class="t" style="left:265.0px;top:59px;color:#101e5c;transform:scaleX(0.9505)">ФИО</span>
<span class="t" style="left:437.0px;top:59px;color:#101e5c;transform:scaleX(1.0164)">Должность</span>
<span class="t" style="left:577.0px;top:59px;color:#101e5c;transform:scaleX(0.9923)">Рабочий телефон</span>
<span class="t" style="left:692.0px;top:59px;color:#101e5c;transform:scaleX(0.9496)">E-mail</span>
<span class="t" style="left:265.0px;top:79px;color:#000;transform:scaleX(0.9997)">Галкин Валентин Дмитриевич</span>
<span class="t" style="left:265.0px;top:98px;color:#000;transform:scaleX(0.9893)">Иванов Иван Иванович</span>
<span class="t" style="left:265.0px;top:117px;color:#000;transform:scaleX(1.0150)">Петров Петр Петрович</span>
<span class="t" style="left:437.0px;top:79px;color:#000;transform:scaleX(1.0350)">Директор</span>
<span class="t" style="left:437.0px;top:98px;color:#000;transform:scaleX(0.9967)">Заместитель директора</span>
<span class="t" style="left:437.0px;top:117px;color:#000;transform:scaleX(1.0311)">Секретарь директора</span>
<span class="t" style="left:577.0px;top:79px;color:#000;transform:scaleX(1.0188)">763-23-23</span>
<span class="t" style="left:577.0px;top:98px;color:#000;transform:scaleX(1.0188)">763-87-12</span>
<span class="t" style="left:577.0px;top:117px;color:#000;transform:scaleX(1.0529)">763-11-11</span>
<span class="t" style="left:693.0px;top:79px;color:#000;transform:scaleX(0.9834)">galkin@alternativa.com</span>
<span class="t" style="left:692.0px;top:98px;color:#000;transform:scaleX(1.0088)">ivanov@alternativa.com</span>
<span class="t" style="left:692.0px;top:117px;color:#000;transform:scaleX(1.0195)">petrov@alternativa.com</span>
<span class="t" style="left:274.0px;top:300px;color:#0e2060;transform:scaleX(1.0219)">Строка поиска:</span>
<span class="t" style="left:273.0px;top:324px;color:#0e2060;transform:scaleX(0.9957)">Режим поиска:</span>
<span class="t" style="left:384.0px;top:324px;color:#000;transform:scaleX(1.0498)">Сотрудник</span>
<span class="t" style="left:729.5px;top:325px;color:#8b97ab;transform:scaleX(1.0366)">Поиск</span>
<span class="t" style="left:293.0px;top:350px;color:#0e2060;transform:scaleX(1.0071)">Искать записи недоступные для выбора</span>
<span class="t" style="left:273.0px;top:370px;color:#0e2060;transform:scaleX(1.0471)">Результаты поиска:</span>
<span class="t" style="left:293.0px;top:389px;color:#101e5c;transform:scaleX(1.0116)">Подразделение</span>
<span class="t" style="left:464.0px;top:389px;color:#101e5c;transform:scaleX(1.0311)">Сотрудник</span>
<span class="t" style="left:634.0px;top:389px;color:#101e5c;transform:scaleX(1.0164)">Должность</span>
<span class="t" style="left:31.5px;top:481px;color:#0e2060;transform:scaleX(1.0341)">Конструкторы и справочники</span>
</body></html>
